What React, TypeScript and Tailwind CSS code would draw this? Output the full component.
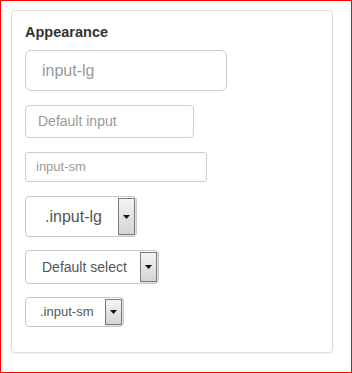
import React from 'react';

function FakeSelect({
  label,
  width,
  height,
  textClass,
  padClass,
}: {
  label: string;
  width: string;
  height: string;
  textClass: string;
  padClass: string;
}) {
  return (
    <div className={`relative flex items-center rounded-[4px] border border-[#c8c8c8] bg-white ${width} ${height}`}>
      <span className={`${padClass} ${textClass} text-[#555]`}>{label}</span>
      <div className="absolute top-[1px] right-[1px] bottom-[1px] flex w-[17px] items-center justify-center border border-[#7a7a7a] bg-gradient-to-b from-[#f4f4f4] to-[#d4d4d4] shadow-[1px_1px_0_#e0e0e0]">
        <svg width="7" height="4" viewBox="0 0 7 4">
          <path d="M0 0h7L3.5 4z" fill="#111" />
        </svg>
      </div>
    </div>
  );
}

export default function App() {
  return (
    <div
      className="h-[373px] w-[352px] border border-[#ff0000] bg-white"
      style={{ fontFamily: '"Liberation Sans", Arial, sans-serif' }}
    >
      <div className="ml-[10px] mt-[9px] flex h-[343px] w-[322px] flex-col rounded-[4px] border border-[#dcdcdc] px-[13px] pt-[11px] shadow-[0_1px_1px_rgba(0,0,0,0.05)]">
        <h3 className="text-[14.5px] font-bold leading-[20px] text-[#333]">Appearance</h3>

        <div className="mt-[8px] flex h-[41px] w-[202px] items-center rounded-[6px] border border-[#cccccc] px-[16px] text-[16px] text-[#999]">
          input-lg
        </div>

        <div className="mt-[14px] flex h-[33px] w-[169px] items-center rounded-[4px] border border-[#cccccc] px-[12px] text-[14px] text-[#999]">
          Default input
        </div>

        <div className="mt-[14px] flex h-[30px] w-[182px] items-center rounded-[3px] border border-[#cccccc] px-[10px] text-[13px] text-[#999]">
          input-sm
        </div>

        <div className="mt-[14px]">
          <FakeSelect label=".input-lg" width="w-[112px]" height="h-[41px]" textClass="text-[16px]" padClass="pl-[19px]" />
        </div>

        <div className="mt-[13px]">
          <FakeSelect label="Default select" width="w-[134px]" height="h-[34px]" textClass="text-[14px]" padClass="pl-[16px]" />
        </div>

        <div className="mt-[13px]">
          <FakeSelect label=".input-sm" width="w-[99px]" height="h-[30px]" textClass="text-[13px]" padClass="pl-[14px]" />
        </div>
      </div>
    </div>
  );
}
